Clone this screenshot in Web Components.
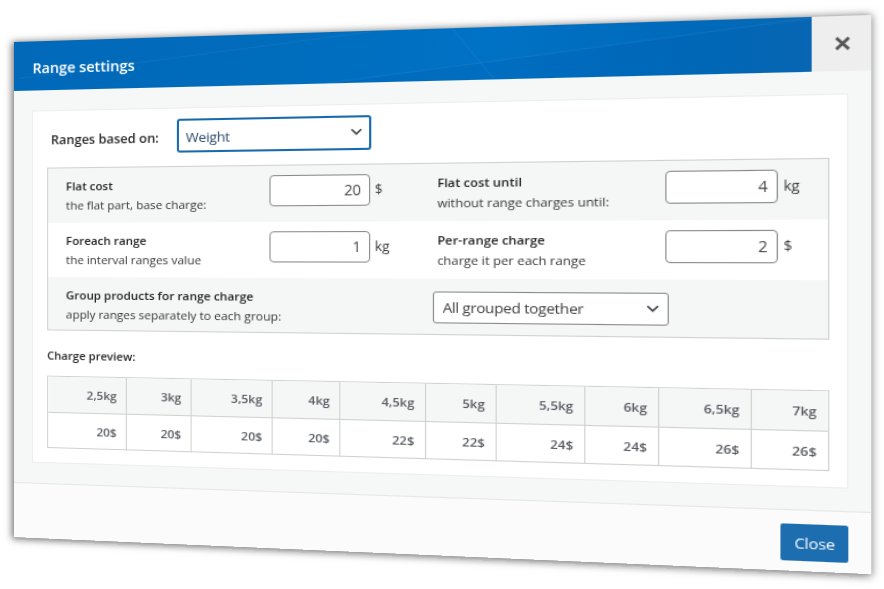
<!DOCTYPE html>
<html lang="en"><head><meta charset="utf-8"><title>Range settings</title>
<style>
html,body{margin:0;padding:0;background:#fff;overflow:hidden;height:100%}
body{font-family:"Open Sans","Noto Sans",sans-serif;color:#333}
</style></head><body>
<x-modal>
  <x-header slot="head">Range settings</x-header>
  <x-panel>
    <x-basis><x-select value="Weight" focused></x-select></x-basis>
    <x-box>
      <x-row alt>
        <x-field value="20" unit="$"><span slot="t">Flat cost</span><span slot="s">the flat part, base charge:</span></x-field>
        <x-field value="4" unit="kg" wide><span slot="t">Flat cost until</span><span slot="s">without range charges until:</span></x-field>
      </x-row>
      <x-row>
        <x-field value="1" unit="kg"><span slot="t">Foreach range</span><span slot="s">the interval ranges value</span></x-field>
        <x-field value="2" unit="$" wide><span slot="t">Per-range charge</span><span slot="s">charge it per each range</span></x-field>
      </x-row>
      <x-row alt>
        <x-group><span slot="t">Group products for range charge</span><span slot="s">apply ranges separately to each group:</span><x-select value="All grouped together" slot="c"></x-select></x-group>
      </x-row>
    </x-box>
    <x-preview data-kg="2,5kg|3kg|3,5kg|4kg|4,5kg|5kg|5,5kg|6kg|6,5kg|7kg" data-cost="20$|20$|20$|20$|22$|22$|24$|24$|26$|26$"></x-preview>
  </x-panel>
  <x-button slot="foot">Close</x-button>
</x-modal>
<script>
function def(name, css, html){
  customElements.define(name, class extends HTMLElement{
    connectedCallback(){
      if(this.shadowRoot)return;
      const r=this.attachShadow({mode:'open'});
      r.innerHTML='<style>'+css+'</style>'+(typeof html==='function'?html(this):html);
    }
  });
}
def('x-modal',`
:host{display:flex;flex-direction:column;box-sizing:border-box;width:759px;height:495px;background:#f6f7f7;
 transform-origin:0 0;transform:matrix3d(0.9978,-0.03784,0,-0.000151, 0,1,0,0, 0,0,1,0, 14,42,0,1);
 box-shadow:-1px 1px 7px 1px rgba(0,0,0,.55)}
.body{flex:1;min-height:0;padding:19.5px 18px 0}
.foot{height:55px;box-sizing:border-box;border-top:1px solid #e6e6e6;background:#fbfbfb;display:flex;justify-content:flex-end;align-items:flex-start;padding:12px 17.6px 0 0}
`,`<slot name="head"></slot><div class="body"><slot></slot></div><div class="foot"><slot name="foot"></slot></div>`);

def('x-header',`
:host{display:grid;grid-template-columns:1fr 47px;height:49px;flex:none}
.bar{position:relative;overflow:hidden;display:flex;align-items:center;padding-left:18.5px;
 background:linear-gradient(90deg,#0068b8 0%,#006cbc 35%,#0072c5 62%,#0069b9 88%,#0a69b6 100%);
 color:#fff;font-size:14.2px;font-weight:600}
svg.bg{position:absolute;inset:0;width:100%;height:100%}
.t{position:relative;top:1.5px}
.x{background:#eee;display:flex;align-items:center;justify-content:center}
.x svg{margin-left:1px}
`,`<div class="bar"><svg class="bg" viewBox="0 0 712 49" preserveAspectRatio="none">
<polygon points="0,40 6,36 338,1 0,0" fill="#0a70bd" opacity=".2"/>
<polygon points="299,49 435,33 712,1 712,49" fill="#0059a8" opacity=".15"/>
<polyline points="6,36.5 338,1" fill="none" stroke="#3d94d6" stroke-width=".7" opacity=".35"/>
<polyline points="299,48.6 435,33.3 712,1" fill="none" stroke="#3d94d6" stroke-width=".7" opacity=".4"/>
<line x1="411" y1="0" x2="447" y2="48" stroke="#3d94d6" stroke-width=".7" opacity=".4"/>
</svg><span class="t"><slot></slot></span></div>
<div class="x"><svg width="13" height="13" viewBox="0 0 13 13"><path d="M1.5 1.5l10 10M11.5 1.5l-10 10" stroke="#555" stroke-width="2.5" fill="none"/></svg></div>`);

def('x-panel',`
:host{display:block;box-sizing:border-box;height:351.5px;background:#fff;border:1px solid #eceded;padding:10px 14px 0}
`,`<slot></slot>`);

def('x-basis',`
:host{display:grid;grid-template-columns:122px 180px;align-items:center;height:33.5px;padding-left:3.8px;font-size:12.5px;font-weight:600;color:#2a2a2a}
span{position:relative;top:2px}
`,`<span>Ranges based on:</span><slot></slot>`);

def('x-select',`
:host{box-sizing:border-box;height:30px;background:#fff;border:1px solid #888;border-radius:3px;color:#3c3c3c;font-size:13.2px;letter-spacing:-.25px;font-weight:400;
 display:flex;align-items:center;justify-content:space-between;padding:0 6px 0 7.8px}
:host([focused]){height:33.5px;border:2px solid #1a6aab;color:#2b4a6b;padding:0 5px 0 6.8px}
:host([focused]) span{position:relative;top:1.5px}
svg{flex:none}
`,el=>`<span>${el.getAttribute('value')}</span><svg width="12" height="8" viewBox="0 0 12 8"><path d="M1.2 1.2l4.4 4.4 4.4-4.4" fill="none" stroke="#3b4248" stroke-width="1.6"/></svg>`);

def('x-box',`
:host{display:grid;grid-template-rows:54px 54px 1fr;box-sizing:border-box;height:162.8px;margin-top:12.7px;border:1px solid #cfd1d1}
`,`<slot></slot>`);

def('x-row',`
:host{display:grid;grid-template-columns:346.3px 1fr;padding-left:17.6px;background:#fff;font-size:12px}
:host([alt]){background:#f5f6f6}
`,`<slot></slot>`);

const labelCss=`
.l{padding-top:8.5px;line-height:19px}
.t{font-weight:600;color:#262626;display:block;font-size:11.35px}
.s{display:block;color:#363636;font-size:11.4px}
`;
def('x-field',labelCss+`
:host{display:grid;grid-template-columns:194.2px 92px auto;align-items:start}
:host([wide]){grid-template-columns:195px 92px auto}
.i{margin-top:9.5px;box-sizing:border-box;height:30px;background:#fff;border:1px solid #888;border-radius:4px;text-align:right;line-height:28px;padding-right:7.5px;font-size:13.6px;letter-spacing:-.4px;color:#4a4a4a}
.u{margin:14px 0 0 4.5px;font-size:12.3px;color:#3c3c3c;line-height:20px}
`,el=>`<div class="l"><slot name="t" class="t"></slot><slot name="s" class="s"></slot></div>
<div class="i">${el.getAttribute('value')}</div><div class="u">${el.getAttribute('unit')}</div>`);

def('x-group',labelCss+`
:host{display:grid;grid-template-columns:342.3px 202.4px;grid-column:1/-1;align-items:start}
.l{padding-top:8.4px}
.c{margin-top:12.5px}
`,`<div class="l"><slot name="t" class="t"></slot><slot name="s" class="s"></slot></div><div class="c"><slot name="c"></slot></div>`);

def('x-preview',`
:host{display:block}
.h{margin-top:15px;height:19px;line-height:19px;font-size:11.1px;font-weight:600;color:#2a2a2a}
.g{margin-top:10.5px;display:grid;grid-template-columns:repeat(5,76.4fr 62.3fr);grid-template-rows:36.5px 35px;border:1px solid #cfd1d1;box-sizing:border-box;height:72.5px}
.c{display:flex;align-items:center;justify-content:flex-end;padding-right:9px;font-size:11.5px;font-weight:600;color:#565a60;border-left:1px solid #cfd1d1;min-width:0}
.c.f{border-left:0}
.c.k{background:#f5f6f6;border-bottom:1px solid #cfd1d1}
`,el=>{
  const k=el.dataset.kg.split('|'),c=el.dataset.cost.split('|');
  const cell=(t,i,cl)=>`<div class="c ${cl}${i?'':' f'}">${t}</div>`;
  return `<div class="h">Charge preview:</div><div class="g">${k.map((t,i)=>cell(t,i,'k')).join('')}${c.map((t,i)=>cell(t,i,'')).join('')}</div>`;
});

def('x-button',`
:host{display:flex;align-items:center;justify-content:center;width:54px;height:33px;box-sizing:border-box;background:#1d6eb0;border-radius:2px;color:#fff;font-size:13px;letter-spacing:-.1px}
`,`<slot></slot>`);
</script>
</body></html>
